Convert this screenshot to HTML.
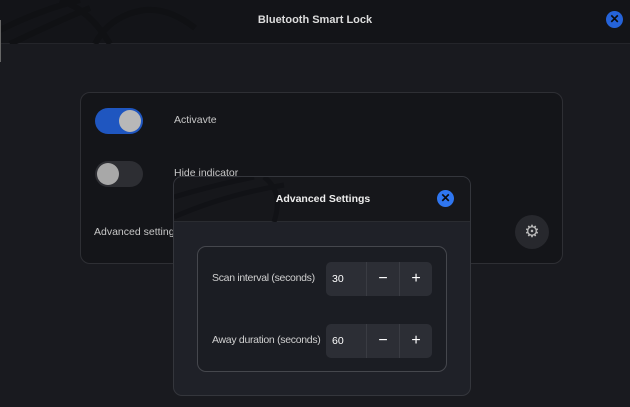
<!DOCTYPE html>
<html><head><style>
*{margin:0;padding:0;box-sizing:border-box}
body{width:630px;height:407px;background:#191a1f;font-family:"Liberation Sans",sans-serif;color:#d0d0d0;position:relative;overflow:hidden;font-size:10.5px}
.abs{position:absolute}
.hdr{left:0;top:0;width:630px;height:44px;background:#131418;border-bottom:1px solid #24252a}
.title{left:0;width:630px;top:14px;text-align:center;font-weight:bold;font-size:11px;color:#ddd}
.xbtn{width:17px;height:17px;border-radius:50%;background:#2563d9;color:#0b0b0b;font-weight:bold;text-align:center;line-height:17px;font-size:12px}
.card{left:80px;top:92px;width:483px;height:172px;background:#141519;border:1px solid #2e2f34;border-radius:10px}
.tog{width:48px;height:26px;border-radius:13px}
.knob{width:22px;height:22px;border-radius:50%;background:#b8b8b8;top:2px}
.dlg{left:173px;top:176px;width:298px;height:220px;background:#1f2128;border:1px solid #34363c;border-radius:9px;overflow:hidden}
.dh{left:0;top:0;width:298px;height:45px;background:#16171b;border-bottom:1px solid #2a2c31}
.frame{left:23px;top:69px;width:250px;height:126px;border:1px solid #45474d;border-radius:9px;background:#1b1d23}
.spin{width:106px;height:34px;background:#2c2e35;border-radius:5px}
.spin div{position:absolute;top:0;height:34px;line-height:34px;color:#fff}
.lbl{letter-spacing:-0.3px}
</style></head><body>
<div class="abs hdr">
<svg class="abs" style="left:0;top:0" width="220" height="44"><path d="M0 30 Q40 10 80 0 M10 44 Q60 20 90 8 M95 44 Q110 15 145 10 Q170 8 195 28 M60 0 Q90 10 110 44" stroke="#101114" stroke-width="6" fill="none"/></svg>
<div class="abs title">Bluetooth Smart Lock</div>
<div class="abs xbtn" style="left:606px;top:11px">✕</div>
</div>
<div class="abs" style="left:0;top:20px;width:1px;height:42px;background:#666"></div>
<div class="abs card">
<div class="abs tog" style="left:14px;top:15px;background:#1f56c0"><div class="abs knob" style="left:24px"></div></div>
<div class="abs" style="left:93px;top:21px;color:#c8c8c8">Activavte</div>
<div class="abs tog" style="left:14px;top:68px;background:#2d2e33"><div class="abs knob" style="left:2px;background:#a8a8a8"></div></div>
<div class="abs" style="left:93px;top:74px;color:#c8c8c8">Hide indicator</div>
<div class="abs" style="left:13px;top:133px;color:#c8c8c8">Advanced settings</div>
<div class="abs" style="left:434px;top:122px;width:34px;height:34px;border-radius:50%;background:#27282d;color:#bbb;font-size:17px;text-align:center;line-height:34px">⚙</div>
</div>
<div class="abs dlg">
<div class="abs dh">
<svg class="abs" style="left:0;top:0" width="298" height="45"><path d="M0 20 Q40 8 80 0 M0 40 Q50 18 110 8 M100 45 Q110 15 90 0" stroke="#111216" stroke-width="5" fill="none"/></svg>
<div class="abs" style="left:0;width:298px;top:16px;text-align:center;font-weight:bold;color:#eee">Advanced Settings</div>
<div class="abs xbtn" style="left:263px;top:13px;background:#2f76f0">✕</div>
</div>
<div class="abs frame">
<div class="abs lbl" style="left:14px;top:25px">Scan interval (seconds)</div>
<div class="abs spin" style="left:128px;top:15px"><div style="left:6px">30</div><div style="left:40px;width:33px;border-left:1px solid #3a3c43;text-align:center;font-size:16px">−</div><div style="left:73px;width:33px;border-left:1px solid #3a3c43;text-align:center;font-size:16px">+</div></div>
<div class="abs lbl" style="left:14px;top:87px">Away duration (seconds)</div>
<div class="abs spin" style="left:128px;top:77px"><div style="left:6px">60</div><div style="left:40px;width:33px;border-left:1px solid #3a3c43;text-align:center;font-size:16px">−</div><div style="left:73px;width:33px;border-left:1px solid #3a3c43;text-align:center;font-size:16px">+</div></div>
</div>
</div>
</body></html>
